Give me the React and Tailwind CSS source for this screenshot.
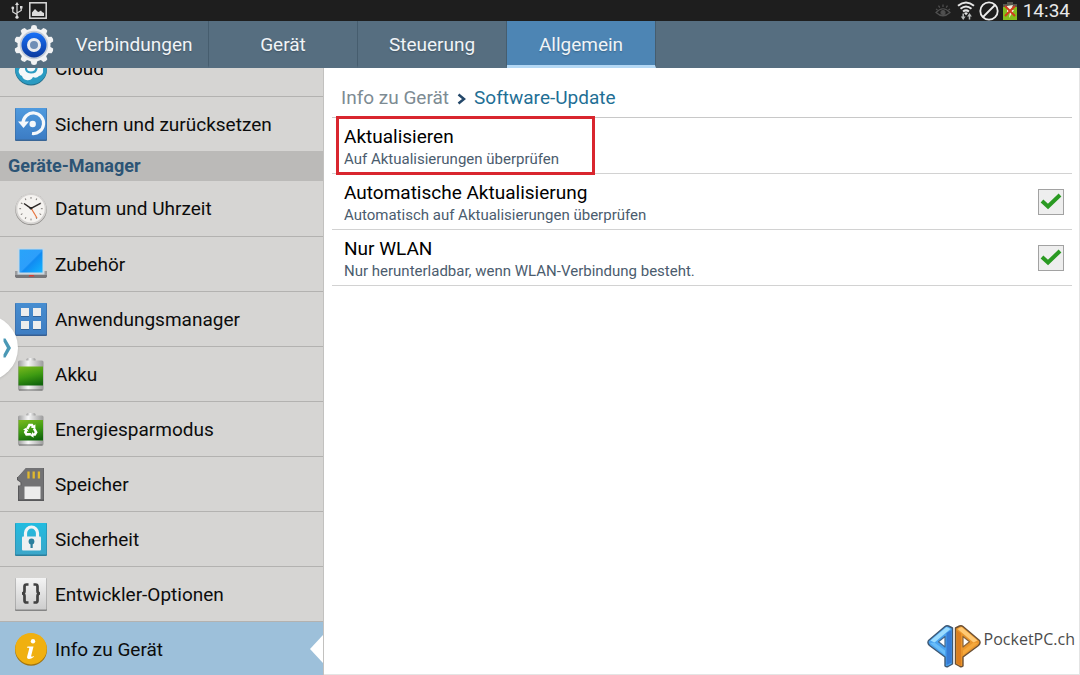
import { useState } from 'react';

const tabs = ['Verbindungen', 'Gerät', 'Steuerung', 'Allgemein'];

// Square tile with a slight bevel, shared by several menu icons
const Tile = ({ id, from, to, edge, children }) => (
  <svg viewBox="0 0 32 34" className="h-[34px] w-8 shrink-0" aria-hidden="true">
    <defs>
      <linearGradient id={id} x1="0" y1="0" x2="0" y2="1">
        <stop offset="0" stopColor={from} />
        <stop offset="1" stopColor={to} />
      </linearGradient>
    </defs>
    <rect x="0" y="1" width="32" height="33" rx="1" fill={edge} />
    <rect x="0.5" y="1" width="31" height="31.5" rx="0.5" fill={`url(#${id})`} />
    {children}
  </svg>
);

const CloudIcon = () => (
  <svg viewBox="0 0 32 34" className="h-[34px] w-8 shrink-0" aria-hidden="true">
    <circle cx="16" cy="17.5" r="16" fill="#256f8c" />
    <circle cx="16" cy="16.7" r="15.8" fill="#2a9bc2" />
    <path d="M7 24a5 5 0 0 1-2-8 6 6 0 0 1 6-6 7 7 0 0 1 12 1 6 6 0 0 1 5 7 5 5 0 0 1-4 6 5 5 0 0 1-6 1 6 6 0 0 1-11-1z" fill="#f4f8fa" />
    <path d="M11 15q-.5 5.500 5 5.500t5.500-5" fill="none" stroke="#2a9bc2" strokeWidth="2.200" />
  </svg>
);

const BackupIcon = () => (
  <Tile id="backup" from="#4f9ade" to="#3c7cc4" edge="#3a6696">
    <path d="M8 15.500A10.300 10.300 0 1 1 17 26.500" fill="none" stroke="#f5f8fb" strokeWidth="3.200" />
    <path d="M3 14.500h11l-5.500 6.500z" fill="#f5f8fb" />
    <circle cx="17.700" cy="17" r="3.200" fill="#f5f8fb" />
  </Tile>
);

const ClockIcon = () => (
  <svg viewBox="0 0 32 34" className="h-[34px] w-8 shrink-0" aria-hidden="true">
    <circle cx="16" cy="17.500" r="15.700" fill="#8d8b88" />
    <circle cx="16" cy="16.700" r="15.500" fill="#d4d2d0" />
    <circle cx="16" cy="16.700" r="13.700" fill="#f5f3f0" />
    {[0, 30, 60, 90, 120, 150, 180, 210, 240, 270, 300, 330].map((a) => (
      <path key={a} d="M16 5v1.800" stroke="#77736f" strokeWidth="0.900" transform={`rotate(${a} 16 16.700)`} />
    ))}
    <path d="M16 16l6 10" stroke="#e8743c" strokeWidth="1.200" />
    <path d="M9 11.500l7 4.800 9.500-5" fill="none" stroke="#2b2725" strokeWidth="1.500" />
    <circle cx="16" cy="16.300" r="1.300" fill="#2b2725" />
  </svg>
);

const LaptopIcon = () => (
  <svg viewBox="0 0 34 34" className="-mx-px h-[34px] w-[34px] shrink-0" aria-hidden="true">
    <defs>
      <linearGradient id="screen" x1="0" y1="0" x2="1" y2="1">
        <stop offset="0" stopColor="#29a4fa" />
        <stop offset="0.500" stopColor="#2d9ffb" />
        <stop offset="0.550" stopColor="#118bf2" />
        <stop offset="1" stopColor="#13b5ff" />
      </linearGradient>
    </defs>
    <path d="M1 24h32v5.500l-1 1.500H2l-1-1.500z" fill="#77777a" />
    <path d="M1 24h32v4H1z" fill="#9b9c9e" />
    <rect x="3.500" y="1" width="27" height="26.500" fill="#c9d8e2" />
    <rect x="5.500" y="2.500" width="23" height="23" fill="url(#screen)" />
    <path d="M14.500 29.500l1-1.500h4l1 1.500z" fill="#d63c32" />
  </svg>
);

const AppsIcon = () => (
  <Tile id="apps" from="#478dd0" to="#3e7dc2" edge="#375f92">
    {[[6, 6], [18, 6], [6, 19], [18, 19]].map(([x, y]) => (
      <g key={`${x}-${y}`}>
        <rect x={x} y={y + 0.700} width="8" height="8.300" fill="#31639b" />
        <rect x={x} y={y} width="8" height="8" fill="#ededed" />
      </g>
    ))}
  </Tile>
);

const BatteryShape = ({ id, tall, children }) => (
  <svg viewBox="0 0 32 34" className="h-[34px] w-8 shrink-0" aria-hidden="true">
    <defs>
      <linearGradient id={id} x1="0.300" y1="0" x2="0.600" y2="1">
        <stop offset="0" stopColor="#72b51c" />
        <stop offset="0.500" stopColor="#3d9a12" />
        <stop offset="1" stopColor="#12660c" />
      </linearGradient>
      <linearGradient id={`${id}-metal`}>
        <stop offset="0" stopColor="#9c9c9c" />
        <stop offset="0.400" stopColor="#f7f7f7" />
        <stop offset="1" stopColor="#9a9a9a" />
      </linearGradient>
    </defs>
    <rect x="11.500" y="1" width="9" height="4" rx="1.500" fill={`url(#${id}-metal)`} />
    <rect x="3" y="3.500" width="25.500" height="30" rx="1.500" fill={`url(#${id}-metal)`} />
    <rect x="3.500" y={tall ? 8 : 9.500} width="24.500" height={tall ? 20.500 : 19} fill={`url(#${id})`} />
    <path d="M4 33h23.500" stroke="#686868" strokeWidth="1" />
    {children}
  </svg>
);

const RecycleIcon = () => (
  <BatteryShape id="eco" tall>
    <g transform="translate(15.700 18.500) scale(0.850)" fill="none" stroke="#fff" strokeWidth="3">
      {[0, 120, 240].map((a) => (
        <g key={a} transform={`rotate(${a})`}>
          <path d="M-4-2l2.500-4.500h3l1.500 2.500" />
          <path d="M0-2.800h5.500v-4.500z" fill="#fff" stroke="none" />
        </g>
      ))}
    </g>
  </BatteryShape>
);

const SdIcon = () => (
  <svg viewBox="0 0 32 34" className="h-[34px] w-8 shrink-0" aria-hidden="true">
    <path d="M11 1h18v33H3V18.500h2.500v-3L2 13v-3h1z" fill="#58585a" />
    <path d="M11 1h17.500v31.500H4V19.500l2.500-1v-3L3 12.500V10z" fill="#727274" />
    <path d="M13.500 4.500v7M18.700 4.500v7M23.900 4.500v7" stroke="#e2b92d" strokeWidth="2.300" />
    <rect x="9.500" y="19.500" width="16" height="12.500" fill="#ececec" />
  </svg>
);

const LockIcon = () => (
  <Tile id="lock" from="#22bce0" to="#3ba6c9" edge="#2b7f9d">
    <path d="M10.500 16v-5a6 6 0 0 1 12 0v5" fill="none" stroke="#f1f4f5" strokeWidth="3.200" />
    <rect x="7" y="14.500" width="19" height="14" rx="1" fill="#eef0f1" />
    <circle cx="16.500" cy="19.500" r="2.900" fill="#2b7f9d" />
    <path d="M15.500 20h2.200v6h-2.200z" fill="#2b7f9d" />
  </Tile>
);

const BracesIcon = () => (
  <Tile id="dev" from="#f4f4f4" to="#cdcdcd" edge="#858585">
    <path
      d="M13.500 7.500h-2q-2 0-2 2v4.500q0 2.500-2.500 2.500 2.500 0 2.500 2.500v4.500q0 2 2 2h2M18.500 7.500h2q2 0 2 2v4.500q0 2.500 2.500 2.500-2.500 0-2.500 2.500v4.500q0 2-2 2h-2"
      fill="none"
      stroke="#414141"
      strokeWidth="2.700"
    />
  </Tile>
);

const InfoIcon = () => (
  <svg viewBox="0 0 32 34" className="h-[34px] w-8 shrink-0" aria-hidden="true">
    <circle cx="16" cy="17.700" r="16" fill="#a07310" />
    <circle cx="16" cy="16.700" r="15.800" fill="#f0b010" />
    <circle cx="18" cy="9.200" r="2.200" fill="#fff" />
    <path d="M12.500 14.500h6l-2.300 9.300q-.2 1 .8.900l2-.8-.3 1.100q-2.500 2-4.700 2-2.500-.2-1.800-2.800l2-7.500q.2-1-.8-1l-1.300.2z" fill="#fff" />
  </svg>
);

const GearLogo = () => (
  <svg viewBox="0 0 42 42" className="h-[42px] w-[42px]" aria-hidden="true">
    <defs>
      <linearGradient id="ring" x1="0" y1="0" x2="0" y2="1">
        <stop offset="0" stopColor="#1670f8" />
        <stop offset="1" stopColor="#0c3a9e" />
      </linearGradient>
    </defs>
    {[0, 36, 72, 108, 144, 180, 216, 252, 288, 324].map((a) => (
      <path key={a} d="M17.200 7l1.300-5.300q2.500-1.400 5 0L24.800 7z" fill="#f1f2f3" transform={`rotate(${a} 21 21)`} />
    ))}
    <circle cx="21" cy="21" r="16.500" fill="#f1f2f3" />
    <circle cx="21" cy="21" r="14.200" fill="#c3ccd8" />
    <circle cx="21" cy="21" r="12.500" fill="url(#ring)" />
    <circle cx="21" cy="21" r="5.500" fill="#6f8eb5" stroke="#e8ebef" strokeWidth="3" />
  </svg>
);

const UsbIcon = () => (
  <svg viewBox="0 0 12 17" className="h-[17px] w-3" fill="none" stroke="#dcdcdc" strokeWidth="1.200" aria-hidden="true">
    <path d="M6 2v13M6 12.500L1.800 10V6.500M6 11l4.200-2.500V5" />
    <path d="M6 0l2 3H4z" fill="#dcdcdc" stroke="none" />
    <circle cx="6" cy="15.200" r="1.600" fill="#dcdcdc" stroke="none" />
    <circle cx="1.800" cy="6" r="1.400" fill="#dcdcdc" stroke="none" />
    <path d="M9 4h2.500v2.500H9z" fill="#dcdcdc" stroke="none" />
  </svg>
);

const PictureIcon = () => (
  <svg viewBox="0 0 18 17" className="h-[17px] w-[18px]" aria-hidden="true">
    <rect x="0.800" y="0.800" width="16.400" height="15.400" fill="none" stroke="#dcdcdc" strokeWidth="1.500" />
    <path d="M3 14v-3.500l3-3.500 2.500 2.500 1 .5 2.500-1.500 1 1.500 2 1v3z" fill="#dcdcdc" />
  </svg>
);

const EyeIcon = () => (
  <svg viewBox="0 0 16 14" className="h-3.5 w-4" fill="none" stroke="#505050" strokeWidth="1.200" aria-hidden="true">
    <path d="M1 8.500q7-7.500 14 0-7 6.500-14 0zM8 .5v2.500M3.500 1.700l1.300 2M12.500 1.700l-1.300 2M1 5l1.500 1M15 5l-1.500 1" />
    <circle cx="8" cy="8.500" r="2" fill="#505050" />
  </svg>
);

const WifiIcon = () => (
  <svg viewBox="0 0 18 19" className="h-[19px] w-[18px]" fill="none" stroke="#e6e6e6" strokeWidth="2" aria-hidden="true">
    <path d="M1 4.700q8-6.500 16 0M3.500 7.700q5.500-4.500 11 0M6 10.500q3-2.300 6 0" />
    <path d="M7 12l2 2.300L11 12q-2-1.400-4 0z" fill="#e6e6e6" stroke="none" />
    <path d="M6.200 12.500v4M12.500 14v4.500" strokeWidth="1.500" stroke="#b9bcbc" />
    <path d="M3.800 15.500h4.800L6.200 19zM10.100 15.500h4.800L12.500 12z" fill="#b9bcbc" stroke="none" />
  </svg>
);

const BlockedIcon = () => (
  <svg viewBox="0 0 20 20" className="h-5 w-5" fill="none" stroke="#ececec" strokeWidth="1.800" aria-hidden="true">
    <circle cx="10" cy="10" r="8.700" />
    <path d="M4 16L16 4" />
  </svg>
);

const StatusBattery = () => (
  <svg viewBox="0 0 14 19" className="h-[19px] w-3.5" aria-hidden="true">
    <path d="M4 1h6v2h4v4H0V3h4z" fill="#56584f" />
    <path d="M0 6h14v13H0z" fill="#84bd1c" />
    <path d="M4 5l6-1-2 5h3l-5 8 1-6H4z" fill="#f3efdc" />
    <path d="M2 5l10 10M12 5L2 15" stroke="#d23a20" strokeWidth="2" />
  </svg>
);

const PocketLogo = () => (
  <svg viewBox="0 0 54 45" className="h-[45px] w-[54px]" strokeLinejoin="round" aria-hidden="true">
    <path d="M1.500 17.500L18 3.500q1.500-1.300 3.500-.5l4 2V41l-4.500 2.500q-1.500.6-3-.5v-9L2.500 22.500q-2.500-2.500-1-5z" fill="#4aa3ef" stroke="#3f5873" strokeWidth="1.400" />
    <path d="M3.500 17.500L19.500 4l4 2-16 13.500z" fill="#9bdcff" />
    <path d="M3 20l15 12v-4.500L7.500 19.500z" fill="#69bdf8" />
    <path d="M19.500 10v32l5-2.500V7z" fill="#367bd5" />
    <path d="M18 13.500v10.500l-6.500-5.200z" fill="#fff" stroke="#45698f" strokeWidth="1.200" />
    <path d="M52.500 17.500L36 3.500q-1.500-1.300-3.500-.5l-4 2V41l4.500 2.500q1.500.6 3-.5v-9l15.500-11.500q2.500-2.500 1-5z" fill="#ea962c" stroke="#6b5036" strokeWidth="1.400" />
    <path d="M50.500 17.500L34.500 4l-4 2 16 13.500z" fill="#ffc974" />
    <path d="M51 20L36 32v-4.500l10.500-8z" fill="#f5a83c" />
    <path d="M30 7.500v33l4 2V10.500z" fill="#dc7e20" />
    <path d="M36 13.500v10.500l6.500-5.200z" fill="#fff" stroke="#8a643c" strokeWidth="1.200" />
  </svg>
);

const deviceItems = [
  { label: 'Datum und Uhrzeit', icon: <ClockIcon /> },
  { label: 'Zubehör', icon: <LaptopIcon /> },
  { label: 'Anwendungsmanager', icon: <AppsIcon /> },
  { label: 'Akku', icon: <BatteryShape id="akku" /> },
  { label: 'Energiesparmodus', icon: <RecycleIcon /> },
  { label: 'Speicher', icon: <SdIcon /> },
  { label: 'Sicherheit', icon: <LockIcon /> },
  { label: 'Entwickler-Optionen', icon: <BracesIcon /> },
  { label: 'Info zu Gerät', icon: <InfoIcon />, active: true },
];

const MenuItem = ({ label, icon, active, first }) => (
  <li className={first ? '' : 'border-t border-[#b3b2b0]'}>
    <a
      href="#"
      className={`relative flex items-center gap-2 pl-[15px] text-[19px] text-[#0c0c0c] ${first ? 'h-[55px]' : 'h-[54px]'} ${
        active ? 'bg-[#9dc0da]' : ''
      }`}
    >
      {icon}
      <span className="pt-0.5">{label}</span>
      {active && (
        <svg viewBox="0 0 13 28" className="absolute right-0 h-7 w-[13px]" aria-hidden="true">
          <path d="M13 0v28L0 14z" fill="#fff" />
        </svg>
      )}
    </a>
  </li>
);

const CheckRow = ({ title, text }) => {
  const [checked, setChecked] = useState(true);

  return (
    <label className="flex h-14 items-center justify-between border-b border-[#d2d2d2] pr-2 pl-3">
      <span className="flex flex-col pt-0.5">
        <span className="text-[19px] leading-6 text-black">{title}</span>
        <span className="text-[15px] leading-5 text-[#4b5c6e]">{text}</span>
      </span>
      <span className="grid">
        <input
          type="checkbox"
          checked={checked}
          onChange={() => setChecked(!checked)}
          className="peer col-start-1 row-start-1 size-[26px] appearance-none border border-[#a2a2a2] bg-[#eeeeee]"
        />
        <svg
          viewBox="0 0 26 26"
          className="pointer-events-none invisible col-start-1 row-start-1 size-[26px] peer-checked:visible"
          aria-hidden="true"
        >
          <path d="M4 12l6 5.500L22 6" fill="none" stroke="#2a9a22" strokeWidth="4" />
        </svg>
      </span>
    </label>
  );
};

const App = () => {
  const [activeTab, setActiveTab] = useState('Allgemein');

  return (
    <div className="relative flex h-screen flex-col overflow-hidden bg-white font-[Roboto,sans-serif]">
      {/* Status bar */}
      <div className="flex h-[21px] shrink-0 items-center justify-between bg-[#1e1e1e] pr-[10px] pl-[11px]">
        <div className="flex items-center gap-[6px]">
          <UsbIcon />
          <PictureIcon />
        </div>
        <div className="flex items-center gap-1">
          <div className="flex items-center gap-[6px]">
            <EyeIcon />
            <WifiIcon />
          </div>
          <BlockedIcon />
          <div className="flex items-center gap-[6px]">
            <StatusBattery />
            <span className="text-[19px] leading-5 text-[#e8e8e8]">14:34</span>
          </div>
        </div>
      </div>

      {/* Tabs */}
      <header className="flex h-[47px] shrink-0 bg-[#566e80]">
        <div className="flex w-[60px] items-center justify-end pr-[5px]">
          <GearLogo />
        </div>
        <nav className="flex">
          {tabs.map((tab) => (
            <button
              key={tab}
              type="button"
              onClick={() => setActiveTab(tab)}
              className={`w-[149px] border-r border-r-[#465d6e] pt-[5px] text-[19px] text-[#f0f4f7] text-shadow-sm ${
                tab === activeTab ? 'border-b-[3px] border-b-[#b4d8f4] bg-[#4d85b4]' : 'border-b-[3px] border-b-transparent'
              }`}
            >
              {tab}
            </button>
          ))}
        </nav>
      </header>

      <div className="flex min-h-0 flex-1">
        {/* Menu, scrolled down so the first entry is cut off */}
        <aside className="w-[30%] shrink-0 overflow-hidden border-r border-[#c2c1bf] bg-[#d6d5d3]">
          <ul className="-mt-[27px]">
            <MenuItem label="Cloud" icon={<CloudIcon />} first />
            <MenuItem label="Sichern und zurücksetzen" icon={<BackupIcon />} />
          </ul>
          <h2 className="bg-[#bbbab8] pl-2 text-[18px] leading-[30px] font-bold text-[#2c5475]">Geräte-Manager</h2>
          <ul>
            {deviceItems.map((item, i) => (
              <MenuItem key={item.label} {...item} first={i === 0} />
            ))}
          </ul>
        </aside>

        {/* Content */}
        <main className="flex flex-1 flex-col border-r border-b border-[#e4e4e4] pr-[7px] pl-2">
          <nav className="flex h-[50px] items-center gap-2 border-b border-[#c8c8c8] pt-3 pl-[9px] text-[19px]">
            <a href="#" className="text-[#7d8b93]">Info zu Gerät</a>
            <svg viewBox="0 0 9 12" className="h-3 w-[9px]" aria-hidden="true">
              <path d="M1.500 1.500L7 6l-5.500 4.500" fill="none" stroke="#24486a" strokeWidth="2.500" />
            </svg>
            <span className="text-[#1f6f95]">Software-Update</span>
          </nav>

          <div className="relative border-b border-[#d2d2d2]">
            <button type="button" className="flex h-[55px] w-full flex-col justify-center pt-0.5 pl-3 text-left">
              <span className="text-[19px] leading-6 text-black">Aktualisieren</span>
              <span className="text-[15px] leading-5 text-[#4b5c6e]">Auf Aktualisierungen überprüfen</span>
            </button>
            <div className="pointer-events-none absolute -top-0.5 -bottom-0.5 left-1 w-[259px] border-3 border-[#d9262e]" />
          </div>
          <CheckRow title="Automatische Aktualisierung" text="Automatisch auf Aktualisierungen überprüfen" />
          <CheckRow title="Nur WLAN" text="Nur herunterladbar, wenn WLAN-Verbindung besteht." />

          <div className="mt-auto -mr-[3px] mb-[6px] flex items-start gap-[3px] self-end font-['Open_Sans',sans-serif]">
            <PocketLogo />
            <span className="pt-1 text-[16px] leading-6 text-[#4c4c4c]">PocketPC.ch</span>
          </div>
        </main>
      </div>

      {/* Drawer handle */}
      <button
        type="button"
        aria-label="Leiste öffnen"
        className="absolute top-[315px] -left-12 flex size-[66px] items-center justify-end rounded-full bg-white pr-[6px] shadow"
      >
        <svg viewBox="0 0 9 20" className="h-5 w-[9px]" aria-hidden="true">
          <path d="M0.500 0.500h2l5.500 9.500-5.500 9.500h-2v-3L4 10 0.500 3.500z" fill="#4a98b5" />
        </svg>
      </button>
    </div>
  );
};

export default App;
